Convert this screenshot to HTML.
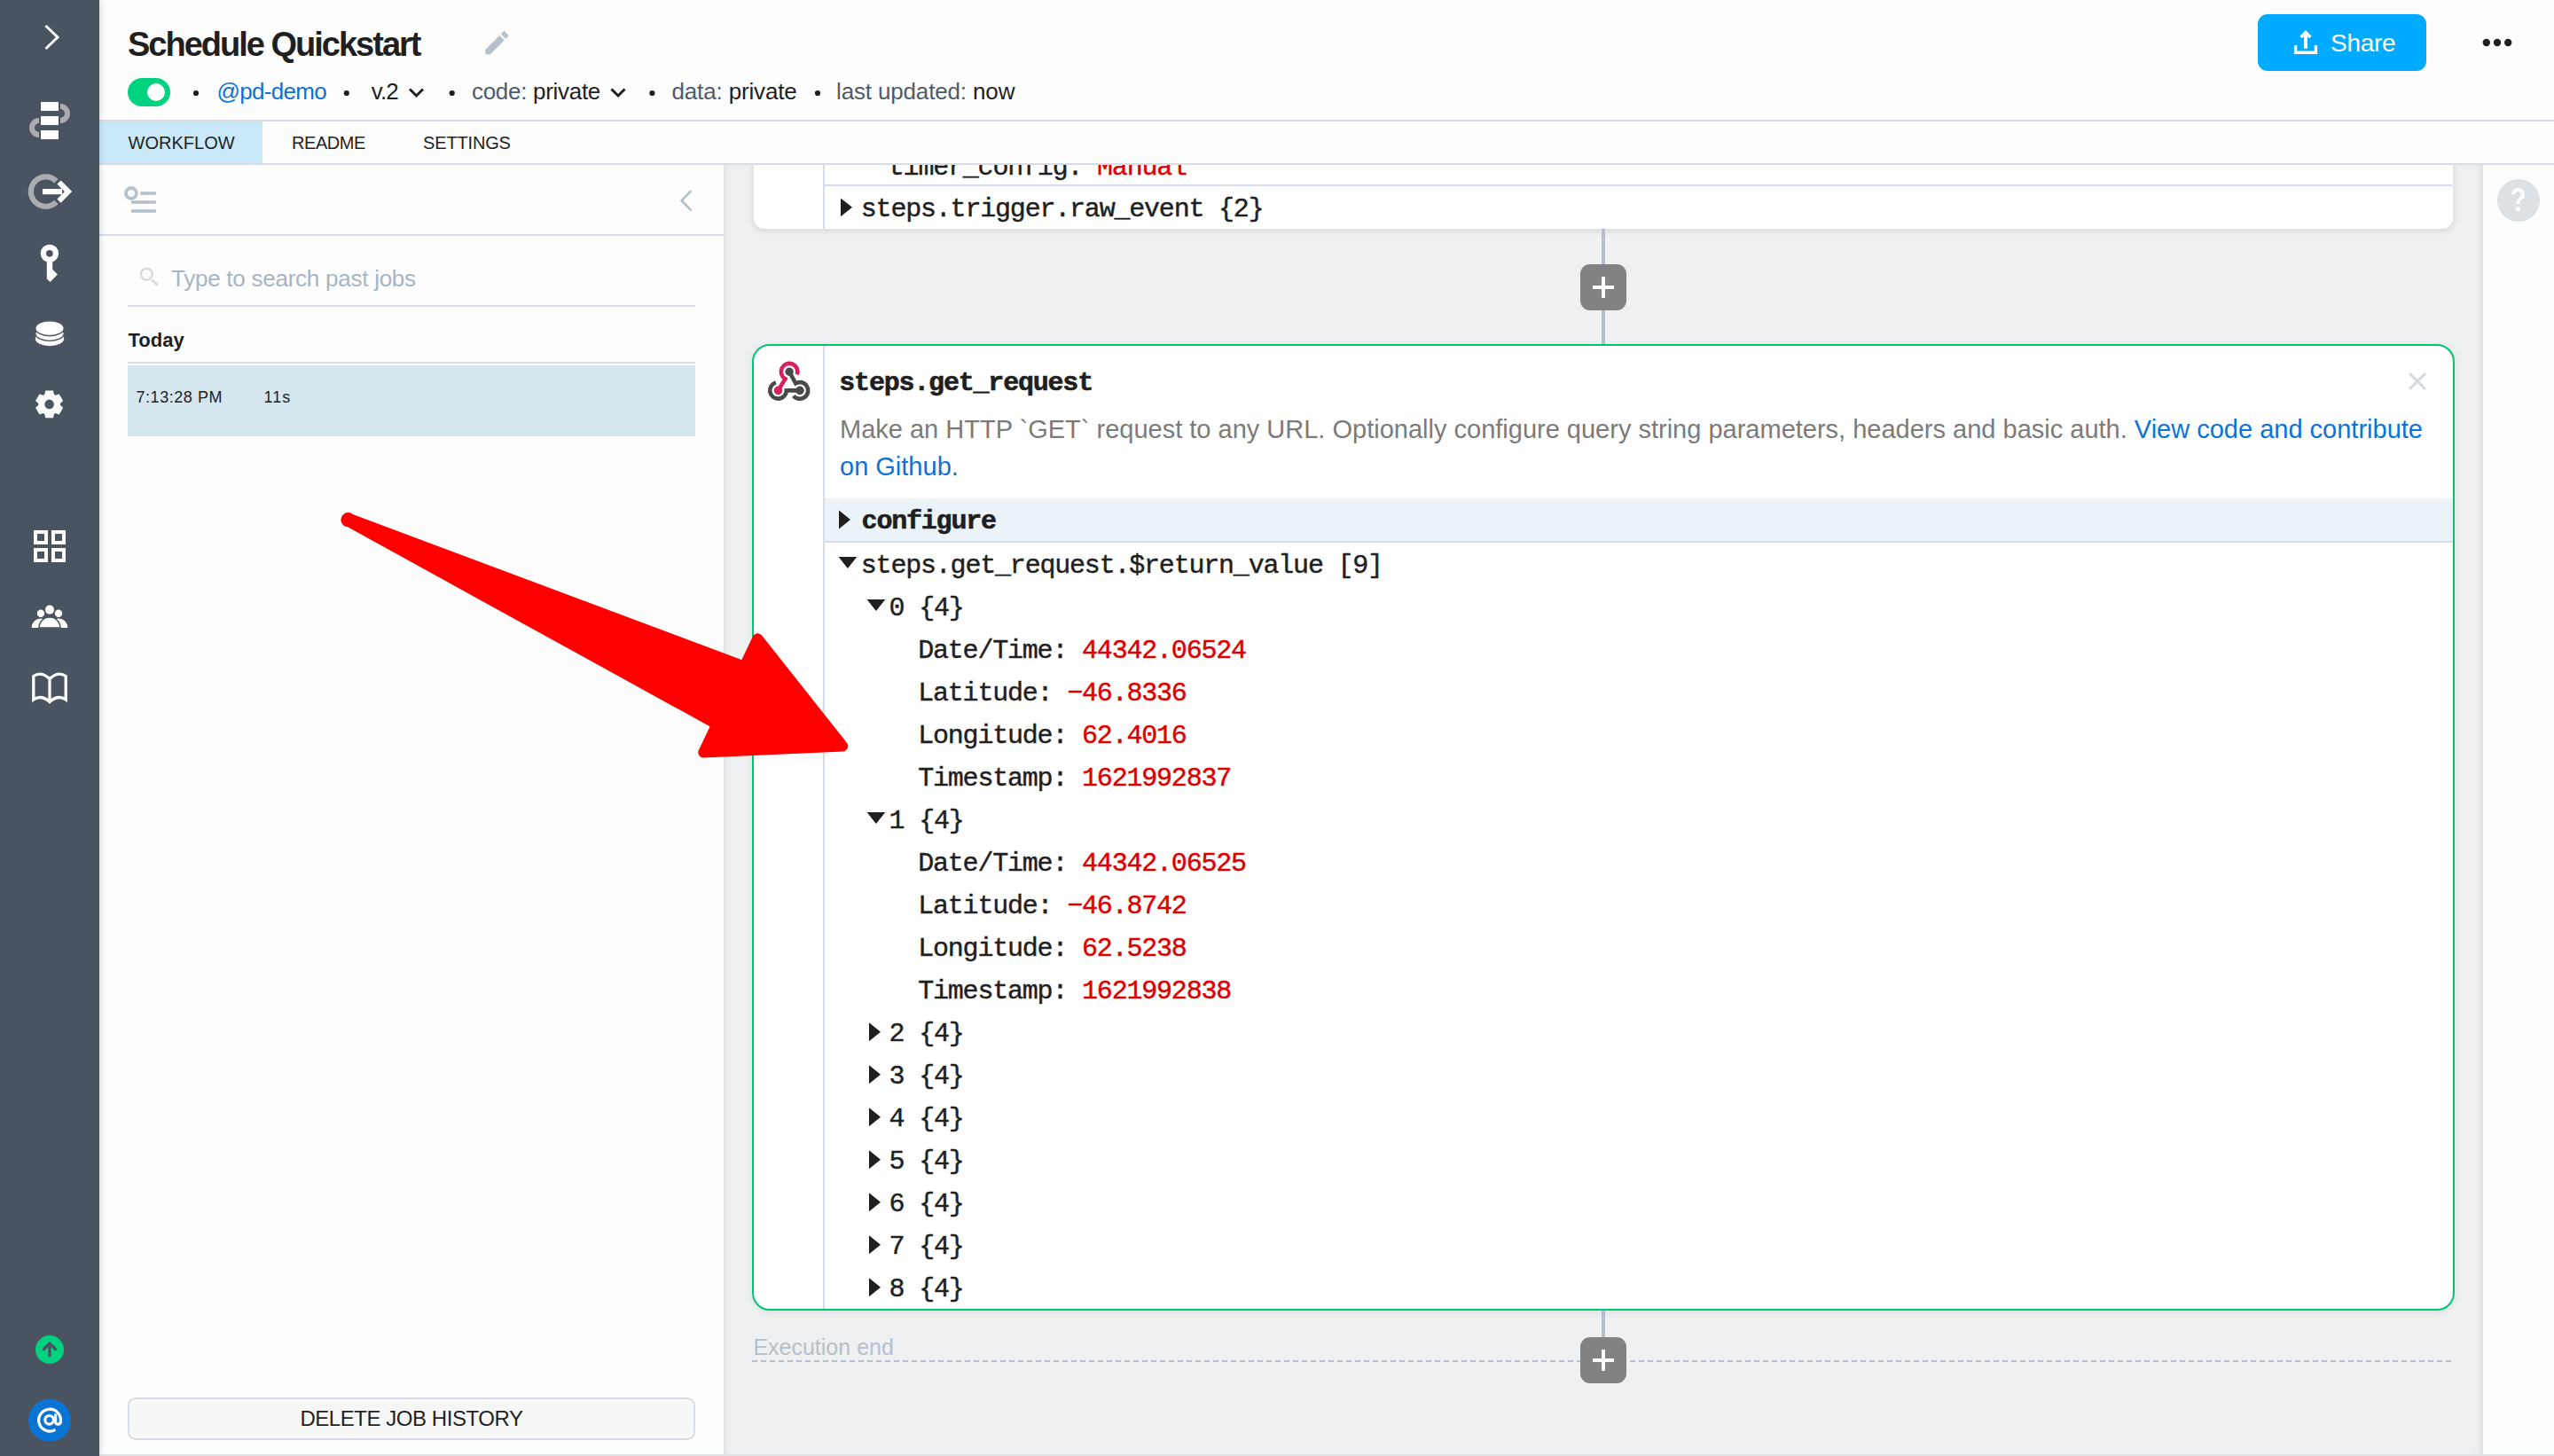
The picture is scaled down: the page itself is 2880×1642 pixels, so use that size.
<!DOCTYPE html>
<html><head><meta charset="utf-8"><title>Schedule Quickstart</title>
<style>
html,body{margin:0;padding:0;}
body{width:2880px;height:1642px;position:relative;overflow:hidden;background:#fdfdfd;font-family:"Liberation Sans",sans-serif;}
.a{position:absolute;}
.t{position:absolute;white-space:pre;line-height:1;}
.s{font-family:"Liberation Sans",sans-serif;}
.m{font-family:"Liberation Mono",monospace;-webkit-text-stroke:0.45px currentColor;}
.r{color:#db0000;}
</style></head><body>
<div class="a" style="left:0px;top:0px;width:2880px;height:1642px;background:#fdfdfd;"></div>
<div class="a" style="left:816px;top:186px;width:1984px;height:1454px;background:#eef0f2;box-shadow: inset 6px 0 6px -4px rgba(0,0,0,0.08), inset -8px 0 8px -6px rgba(0,0,0,0.10);"></div>
<div class="a" style="left:112px;top:1640px;width:2768px;height:2px;background:#dde2e7;"></div>
<div class="a" style="left:112px;top:135px;width:2768px;height:2px;background:#d5dce3;"></div>
<div class="a" style="left:112px;top:184px;width:2768px;height:2px;background:#d5dce3;"></div>
<div class="a" style="left:112px;top:137px;width:184px;height:47px;background:#c9e9fb;"></div>
<div class="a" style="left:112px;top:264px;width:704px;height:2px;background:#d5dce3;"></div>
<div class="a" style="left:0px;top:0px;width:112px;height:1642px;background:#4a5460;box-shadow: 2px 0 6px rgba(0,0,0,0.12);"></div>
<svg class="a" style="left:0;top:0" width="112" height="1642" viewBox="0 0 112 1642">
<polyline points="51.5,29 65,42 51.5,55" fill="none" stroke="#fff" stroke-width="3"/>
<rect x="46" y="115" width="20" height="10" fill="#fff"/>
<rect x="46" y="131" width="20" height="10" fill="#fff"/>
<rect x="46" y="147" width="20" height="10" fill="#fff"/>
<path d="M68 117 A11 11 0 0 1 68 139 L68 133 A5 5 0 0 0 68 123 Z" fill="#a9adb2"/>
<path d="M44 133 A11 11 0 0 0 44 155 L44 149 A5 5 0 0 1 44 139 Z" fill="#a9adb2"/>
<path d="M63.4 204.3 A16.7 16.7 0 1 0 63.4 227.9" fill="none" stroke="#a9adb2" stroke-width="6.2"/>
<rect x="48" y="213" width="22" height="6.2" fill="#fff"/>
<polyline points="66.5,205.5 77,216.1 66.5,226.7" fill="none" stroke="#fff" stroke-width="6" stroke-miterlimit="10"/>
<circle cx="55.9" cy="285.8" r="7" fill="none" stroke="#fff" stroke-width="6.3"/>
<path d="M52.8 292 L52.8 314.4 L56.5 317.9 L64.9 309.5 L59.2 303.8 L59.2 292 Z" fill="#fff"/>
<ellipse cx="56" cy="381.7" rx="16.2" ry="8.5" fill="#fff"/>
<ellipse cx="56" cy="375.9" rx="16.2" ry="8.5" fill="#fff" stroke="#4a5460" stroke-width="1.4"/>
<ellipse cx="56" cy="370.2" rx="16.2" ry="8.5" fill="#fff" stroke="#4a5460" stroke-width="1.4"/>
<path fill="#fff" fill-rule="evenodd" d="M50.30 444.80 L51.20 440.52 L60.00 440.52 L60.90 444.80 L61.75 445.25 L62.56 445.76 L66.72 444.40 L71.12 452.02 L67.86 454.94 L67.90 455.90 L67.86 456.86 L71.12 459.78 L66.72 467.40 L62.56 466.04 L61.75 466.55 L60.90 467.00 L60.00 471.28 L51.20 471.28 L50.30 467.00 L49.45 466.55 L48.64 466.04 L44.48 467.40 L40.08 459.78 L43.34 456.86 L43.30 455.90 L43.34 454.94 L40.08 452.02 L44.48 444.40 L48.64 445.76 L49.45 445.25Z M55.6 450.6 A5.3 5.3 0 1 0 55.6 461.2 A5.3 5.3 0 1 0 55.6 450.6Z"/>
<g fill="none" stroke="#fff" stroke-width="4">
<rect x="40" y="600" width="12" height="12"/><rect x="60" y="600" width="12" height="12"/>
<rect x="40" y="620" width="12" height="12"/><rect x="60" y="620" width="12" height="12"/>
</g>
<circle cx="56" cy="687.6" r="5" fill="#fff"/>
<circle cx="46" cy="691.7" r="4.2" fill="#fff"/>
<circle cx="66" cy="691.7" r="4.2" fill="#fff"/>
<path d="M35.6 708 A10.5 10.5 0 0 1 56.6 708 Z" fill="#fff"/>
<path d="M55.4 708 A10.5 10.5 0 0 1 76.4 708 Z" fill="#fff"/>
<path d="M44 708 A12 12 0 0 1 68 708 Z" fill="#fff" stroke="#4a5460" stroke-width="1.6"/>
<rect x="34" y="708.8" width="44" height="3" fill="#4a5460"/>
<g fill="none" stroke="#fff" stroke-width="3.3" stroke-linejoin="miter">
<path d="M37.8 762.5 Q46.5 756.5 56 765.5 Q65.5 756.5 74.2 762.5 L74.2 789 Q65.5 783 56 791.5 Q46.5 783 37.8 789 Z"/>
<path d="M56 765.5 L56 791"/>
</g>
<circle cx="56" cy="1522" r="16" fill="#00d27f"/>
<path d="M56 1529 L56 1516 M49.5 1521.5 L56 1515 L62.5 1521.5" fill="none" stroke="#4a5460" stroke-width="3.2" stroke-linecap="round" stroke-linejoin="round"/>
<circle cx="56" cy="1601.7" r="24" fill="#0a74d4"/>
</svg>
<svg class="a" style="left:30px;top:1575px" width="52" height="52" viewBox="30 1575 52 52"><g fill="none" stroke="#fff" stroke-width="3.2"><path d="M68.4 1603 A12.4 12.4 0 1 0 62.4 1612.3"/><circle cx="55.6" cy="1601.3" r="4.8"/><path d="M62.6 1594.5 L62.6 1603.2 Q62.8 1606.4 65.6 1606.2 Q68.5 1605.9 68.4 1602.6"/></g></svg>
<div class="t s" style="left:144.0px;top:30.8px;font-size:38px;color:#1f1f1f;font-weight:700;letter-spacing:-2px;">Schedule Quickstart</div>
<svg class="a" style="left:542.5px;top:30.8px" width="34.7" height="34.7" viewBox="0 0 24 24"><path fill="#b4c0cc" d="M3 17.25V21h3.75L17.81 9.94l-3.75-3.75L3 17.25zM20.71 7.04c.39-.39.39-1.02 0-1.41l-2.34-2.34c-.39-.39-1.02-.39-1.41 0l-1.83 1.83 3.75 3.75 1.83-1.83z"/></svg>
<div class="a" style="left:144px;top:88px;width:48px;height:32px;background:#00d37f;border-radius:16px;"></div>
<div class="a" style="left:166px;top:94px;width:20px;height:20px;background:#fff;border-radius:10px;"></div>
<svg class="a" style="left:0;top:0" width="1200" height="136" viewBox="0 0 1200 136">
<g fill="#1f1f1f"><circle cx="221" cy="105" r="3.1"/><circle cx="390.8" cy="105" r="3.1"/><circle cx="509.7" cy="105" r="3.1"/><circle cx="735.4" cy="105" r="3.1"/><circle cx="922" cy="105" r="3.1"/></g>
<g fill="none" stroke="#1f1f1f" stroke-width="3"><polyline points="462,100.5 469.5,108 477,100.5"/><polyline points="689.5,100.5 697,108 704.5,100.5"/></g>
</svg>
<div class="t s" style="left:244.5px;top:89.9px;font-size:26px;color:#0b72d5;letter-spacing:-0.7px;">@pd-demo</div>
<div class="t s" style="left:418.8px;top:90.2px;font-size:26px;color:#1f1f1f;letter-spacing:-0.9px;">v.2</div>
<div class="t s" style="left:532.0px;top:89.9px;font-size:26px;color:#1f1f1f;letter-spacing:-0.3px;"><span style="color:#4f5b68">code:</span> private</div>
<div class="t s" style="left:757.5px;top:89.9px;font-size:26px;color:#1f1f1f;letter-spacing:-0.15px;"><span style="color:#4f5b68">data:</span> private</div>
<div class="t s" style="left:943.0px;top:89.9px;font-size:26px;color:#1f1f1f;letter-spacing:-0.15px;"><span style="color:#4f5b68">last updated:</span> now</div>
<div class="t s" style="left:144.6px;top:151.1px;font-size:20px;color:#1f1f1f;">WORKFLOW</div>
<div class="t s" style="left:329.0px;top:151.1px;font-size:20px;color:#1f1f1f;letter-spacing:-0.45px;">README</div>
<div class="t s" style="left:477.0px;top:151.1px;font-size:20px;color:#1f1f1f;letter-spacing:-0.15px;">SETTINGS</div>
<div class="a" style="left:2546px;top:16px;width:190px;height:64px;background:#00abff;border-radius:11px;"></div>
<svg class="a" style="left:2580px;top:30px" width="40" height="36" viewBox="2580 30 40 36">
<g fill="none" stroke="#fff"><polyline stroke-width="3.4" points="2588.6,51 2588.6,59.3 2611.4,59.3 2611.4,51"/><line stroke-width="3.9" x1="2600" y1="37.5" x2="2600" y2="54.8"/><polyline stroke-width="3.6" points="2594.6,42 2600,36.6 2605.4,42"/></g>
</svg>
<div class="t s" style="left:2628.0px;top:35.0px;font-size:28px;color:#fff;letter-spacing:-0.3px;">Share</div>
<svg class="a" style="left:2790px;top:38px" width="50" height="20" viewBox="2790 38 50 20"><g fill="#1f1f1f"><circle cx="2803.8" cy="48" r="4.2"/><circle cx="2816" cy="48" r="4.2"/><circle cx="2828.2" cy="48" r="4.2"/></g></svg>
<svg class="a" style="left:2810px;top:196px" width="60" height="60" viewBox="2810 196 60 60"><circle cx="2840" cy="226" r="24" fill="#dce1e5"/><path d="M2834.2 219.3 A5.35 5.35 0 1 1 2843.4 223.1 Q2839.3 225.6 2839.3 229.3 L2839.3 230.2" fill="none" stroke="#fff" stroke-width="4"/><circle cx="2839.3" cy="235.6" r="2.7" fill="#fff"/></svg>
<svg class="a" style="left:120px;top:190px" width="700" height="170" viewBox="120 190 700 170">
<circle cx="147.9" cy="217.9" r="5.9" fill="none" stroke="#b4c0cc" stroke-width="3.8"/>
<rect x="158.2" y="216.2" width="17.7" height="3.6" fill="#b4c0cc"/>
<rect x="148" y="226.2" width="27.9" height="3.6" fill="#b4c0cc"/>
<rect x="148" y="236.2" width="27.9" height="3.6" fill="#b4c0cc"/>
<polyline points="779.5,215.2 768.6,226.2 779.5,237.4" fill="none" stroke="#b2bfcb" stroke-width="2.6"/>
<circle cx="165.3" cy="309.2" r="6.45" fill="none" stroke="#d3d9df" stroke-width="2.3"/>
<line x1="172" y1="316.2" x2="176.9" y2="320.8" stroke="#d3d9df" stroke-width="2.8" stroke-linecap="round"/>
</svg>
<div class="t s" style="left:193.0px;top:300.5px;font-size:26px;color:#a6b5c4;letter-spacing:-0.25px;">Type to search past jobs</div>
<div class="a" style="left:144px;top:344px;width:640px;height:2px;background:#d5dce3;"></div>
<div class="t s" style="left:144.5px;top:373.4px;font-size:22px;color:#1f1f1f;font-weight:700;">Today</div>
<div class="a" style="left:144px;top:408px;width:640px;height:2px;background:#d5dce3;"></div>
<div class="a" style="left:144px;top:412px;width:640px;height:80px;background:#d5e6ef;"></div>
<div class="t s" style="left:153.5px;top:438.8px;font-size:18px;color:#1f1f1f;letter-spacing:0.55px;">7:13:28 PM</div>
<div class="t s" style="left:297.5px;top:438.8px;font-size:18px;color:#1f1f1f;letter-spacing:1px;">11s</div>
<div class="a" style="left:144px;top:1576px;width:640px;height:48px;background:#f7f7f7;box-sizing:border-box;border:2px solid #d5dce3;border-radius:9px;"></div>
<div class="t s" style="left:338.4px;top:1587.9px;font-size:24px;color:#1f1f1f;letter-spacing:-0.45px;">DELETE JOB HISTORY</div>
<div class="a" style="left:816px;top:186px;width:1984px;height:1454px;overflow:hidden">
<div class="a" style="left:33px;top:-200px;width:1918px;height:273px;background:#fff;box-sizing:border-box;border:1px solid #e0e5ea;border-radius:13px;box-shadow:0 2px 6px rgba(0,0,0,0.10)"></div>
</div>
<div class="a" style="left:928px;top:186px;width:2px;height:72px;background:#d5dce3;"></div>
<div class="a" style="left:930px;top:208px;width:1835px;height:2px;background:#d5dce3;"></div>
<div class="a" style="left:930px;top:186px;width:1835px;height:21px;overflow:hidden">
<div class="t m" style="left:71.8px;top:-12.5px;font-size:30px;color:#1f1f1f;letter-spacing:-1.2px;">timer_config: <span style="color:#db0000">Manual</span></div>
</div>
<svg class="a" style="left:940px;top:220px" width="30" height="40" viewBox="940 220 30 40"><path d="M948 223.4 L961 233.85 L948 244.3 Z" fill="#1f1f1f"/></svg>
<div class="t m" style="left:970.8px;top:220.8px;font-size:30px;color:#1f1f1f;letter-spacing:-1.2px;">steps.trigger.raw_event {2}</div>
<div class="a" style="left:1806px;top:258px;width:4px;height:130px;background:#b4bfcb;"></div>
<div class="a" style="left:1782px;top:298px;width:52px;height:52px;background:#828282;border-radius:11px;"></div>
<div class="a" style="left:1796px;top:322px;width:24px;height:4px;background:#fff;"></div>
<div class="a" style="left:1806px;top:312px;width:4px;height:24px;background:#fff;"></div>
<div class="a" style="left:848px;top:388px;width:1920px;height:1090px;background:#fff;box-sizing:border-box;border:2px solid #00c672;border-radius:20px;box-shadow:0 2px 8px rgba(0,0,0,0.08);"></div>
<div class="a" style="left:928px;top:390px;width:2px;height:1086px;background:#d5dce3;"></div>
<svg class="a" style="left:856px;top:398px" width="68" height="64" viewBox="0 0 68 64">
<g fill="none" stroke-width="4.6" stroke-linecap="butt">
<path d="M21.5 42.4 L29.45 29.25 A9.3 9.3 0 1 1 42.8 24.4" stroke="#d81f5f"/>
<path d="M34.1 21.2 L41.25 34.35 A9.3 9.3 0 1 1 38.8 48.4" stroke="#4a4a4a"/>
<path d="M45.9 42.4 L30.8 42.4 A9.3 9.3 0 1 1 18.9 33.4" stroke="#4a4a4a"/>
</g>
<circle cx="21.5" cy="42.4" r="4.8" fill="#d81f5f"/>
<circle cx="34.1" cy="21.2" r="4.7" fill="#4a4a4a"/>
<circle cx="45.9" cy="42.4" r="4.8" fill="#4a4a4a"/>
</svg>
<div class="t m" style="left:946.3px;top:417.0px;font-size:30px;color:#1f1f1f;font-weight:700;-webkit-text-stroke:0.6px currentColor;letter-spacing:-1.2px;">steps.get_request</div>
<svg class="a" style="left:2710px;top:414px" width="32" height="32" viewBox="2710 414 32 32"><g stroke="#d3d9de" stroke-width="3"><line x1="2717" y1="421" x2="2735" y2="439"/><line x1="2735" y1="421" x2="2717" y2="439"/></g></svg>
<div class="t s" style="left:947.0px;top:469.9px;font-size:29px;color:#7b7b7b;">Make an HTTP `GET` request to any URL. Optionally configure query string parameters, headers and basic auth. <span style="color:#0b73d7">View code and contribute</span></div>
<div class="t s" style="left:947.0px;top:511.8px;font-size:29px;color:#0b73d7;">on Github.</div>
<div class="a" style="left:930px;top:562px;width:1836px;height:48px;background:#ebf2f8;"></div>
<div class="a" style="left:930px;top:610px;width:1836px;height:2px;background:#d5dce3;"></div>
<svg class="a" style="left:940px;top:575px" width="30" height="40" viewBox="940 575 30 40"><path d="M946 575.5 L959 586 L946 596.5 Z" fill="#1f1f1f"/></svg>
<div class="t m" style="left:971.6px;top:573.2px;font-size:30px;color:#1f1f1f;font-weight:700;-webkit-text-stroke:0.6px currentColor;letter-spacing:-1.2px;">configure</div>
<div class="t m" style="left:970.8px;top:622.6px;font-size:30px;color:#1f1f1f;letter-spacing:-1.2px;">steps.get_request.$return_value [9]</div>
<div class="t m" style="left:1002.6px;top:670.6px;font-size:30px;color:#1f1f1f;letter-spacing:-1.2px;">0 {4}</div>
<div class="t m" style="left:1035.2px;top:718.6px;font-size:30px;color:#1f1f1f;letter-spacing:-1.2px;">Date/Time: <span class="r">44342.06524</span></div>
<div class="t m" style="left:1035.2px;top:766.6px;font-size:30px;color:#1f1f1f;letter-spacing:-1.2px;">Latitude: <span class="r">−46.8336</span></div>
<div class="t m" style="left:1035.2px;top:814.6px;font-size:30px;color:#1f1f1f;letter-spacing:-1.2px;">Longitude: <span class="r">62.4016</span></div>
<div class="t m" style="left:1035.2px;top:862.6px;font-size:30px;color:#1f1f1f;letter-spacing:-1.2px;">Timestamp: <span class="r">1621992837</span></div>
<div class="t m" style="left:1002.6px;top:910.6px;font-size:30px;color:#1f1f1f;letter-spacing:-1.2px;">1 {4}</div>
<div class="t m" style="left:1035.2px;top:958.6px;font-size:30px;color:#1f1f1f;letter-spacing:-1.2px;">Date/Time: <span class="r">44342.06525</span></div>
<div class="t m" style="left:1035.2px;top:1006.6px;font-size:30px;color:#1f1f1f;letter-spacing:-1.2px;">Latitude: <span class="r">−46.8742</span></div>
<div class="t m" style="left:1035.2px;top:1054.6px;font-size:30px;color:#1f1f1f;letter-spacing:-1.2px;">Longitude: <span class="r">62.5238</span></div>
<div class="t m" style="left:1035.2px;top:1102.6px;font-size:30px;color:#1f1f1f;letter-spacing:-1.2px;">Timestamp: <span class="r">1621992838</span></div>
<div class="t m" style="left:1002.6px;top:1150.6px;font-size:30px;color:#1f1f1f;letter-spacing:-1.2px;">2 {4}</div>
<div class="t m" style="left:1002.6px;top:1198.6px;font-size:30px;color:#1f1f1f;letter-spacing:-1.2px;">3 {4}</div>
<div class="t m" style="left:1002.6px;top:1246.6px;font-size:30px;color:#1f1f1f;letter-spacing:-1.2px;">4 {4}</div>
<div class="t m" style="left:1002.6px;top:1294.6px;font-size:30px;color:#1f1f1f;letter-spacing:-1.2px;">5 {4}</div>
<div class="t m" style="left:1002.6px;top:1342.6px;font-size:30px;color:#1f1f1f;letter-spacing:-1.2px;">6 {4}</div>
<div class="t m" style="left:1002.6px;top:1390.6px;font-size:30px;color:#1f1f1f;letter-spacing:-1.2px;">7 {4}</div>
<div class="t m" style="left:1002.6px;top:1438.6px;font-size:30px;color:#1f1f1f;letter-spacing:-1.2px;">8 {4}</div>
<svg class="a" style="left:0;top:0" width="1100" height="1500" viewBox="0 0 1100 1500"><g fill="#1f1f1f"><path d="M945.6 628.0 L966.3 628.0 L955.9 641.0 Z"/><path d="M977.6 676.0 L998.3 676.0 L987.9 689.0 Z"/><path d="M977.6 916.0 L998.3 916.0 L987.9 929.0 Z"/><path d="M980.0 1153.2 L993.0 1163.7 L980.0 1174.2 Z"/><path d="M980.0 1201.2 L993.0 1211.7 L980.0 1222.2 Z"/><path d="M980.0 1249.2 L993.0 1259.7 L980.0 1270.2 Z"/><path d="M980.0 1297.2 L993.0 1307.7 L980.0 1318.2 Z"/><path d="M980.0 1345.2 L993.0 1355.7 L980.0 1366.2 Z"/><path d="M980.0 1393.2 L993.0 1403.7 L980.0 1414.2 Z"/><path d="M980.0 1441.2 L993.0 1451.7 L980.0 1462.2 Z"/></g></svg>
<div class="a" style="left:1806px;top:1478px;width:4px;height:30px;background:#b4bfcb;"></div>
<div class="t s" style="left:849.4px;top:1506.8px;font-size:25px;color:#b5c1cd;">Execution end</div>
<div class="a" style="left:848px;top:1534px;width:1918px;height:2px;background:repeating-linear-gradient(90deg,#b4bfcb 0 6px,transparent 6px 10px);"></div>
<div class="a" style="left:1782px;top:1508px;width:52px;height:52px;background:#828282;border-radius:11px;"></div>
<div class="a" style="left:1796px;top:1532px;width:24px;height:4px;background:#fff;"></div>
<div class="a" style="left:1806px;top:1522px;width:4px;height:24px;background:#fff;"></div>
<svg class="a" style="left:0;top:0" width="1000" height="900" viewBox="0 0 1000 900">
<path d="M392.5 577.98 L836.7 744.3 L860 790 L802.8 820.5 L392.5 594.6 Z" fill="#fe0000"/>
<circle cx="392.5" cy="586.2" r="8.1" fill="#fe0000"/>
<path d="M854.3 720.3 L950.3 841.4 L793.3 848.6 Z" fill="#fe0000" stroke="#fe0000" stroke-width="12" stroke-linejoin="round"/>
</svg>
</body></html>
